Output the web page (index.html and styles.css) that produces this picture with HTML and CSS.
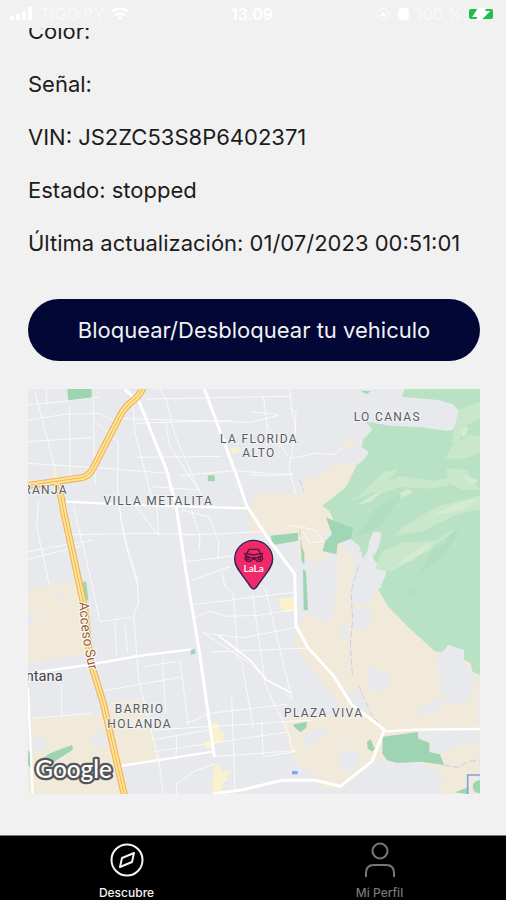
FILE: index.html
```html
<!DOCTYPE html>
<html lang="es">
<head>
<meta charset="utf-8">
<meta name="viewport" content="width=device-width, initial-scale=1">
<title>Tu vehiculo</title>
<link rel="stylesheet" href="styles.css">
</head>
<body>
<header class="status">
  <div class="status-side">
    <svg class="signal" viewBox="0 0 24 14" aria-hidden="true"><rect x="0" y="9" width="4" height="4" rx="1"/><rect x="6" y="7" width="4" height="6" rx="1"/><rect x="12" y="4" width="4" height="9" rx="1"/><rect x="18" y="0" width="4" height="13" rx="1"/></svg>
    <span class="faint">TIGO PY</span>
    <svg class="wifi" viewBox="0 0 20 14" aria-hidden="true"><path d="M1.500 5Q10-2 18.500 5M5 8.500q5-4 10 0" fill="none" stroke="#fff" stroke-width="2.600"/><path d="M7 10.500q3-2 6 0l-3 3z"/></svg>
  </div>
  <time class="clock">13.09</time>
  <div class="status-side status-end">
    <svg class="glyph" viewBox="0 0 14 14" aria-hidden="true"><circle cx="7" cy="7" r="5.500" fill="none" stroke="#fff"/><path d="M7 3.500 10 9H4z"/></svg>
    <svg class="glyph" viewBox="0 0 14 14" aria-hidden="true"><rect x="2" y="1" width="11" height="12" rx="4"/></svg>
    <span class="faint">100 %</span>
    <svg class="battery" viewBox="0 0 25 12" aria-hidden="true"><rect x="0" y="1" width="24" height="10" rx="2" fill="#20bd4b"/><path d="M10 0h6l-1 4h4l-8 8H8l2-4H5z" fill="#fff" stroke="#fff" stroke-width="2"/></svg>
  </div>
</header>

<main class="content">
  <ul class="details">
    <li>Color:</li>
    <li>Señal:</li>
    <li>VIN: JS2ZC53S8P6402371</li>
    <li>Estado: stopped</li>
    <li>Última actualización: 01/07/2023 00:51:01</li>
  </ul>
  <button class="lock" type="button">Bloquear/Desbloquear tu vehiculo</button>

  <svg class="map" viewBox="84 27 1356 1215" role="img" aria-label="Mapa">
    <rect x="84" y="27" width="1356" height="1215" fill="#e7e9ec"/>
    <!-- built-up and open land -->
    <g fill="#f1eadb">
      <path d="M84 629l157-30 20 90 12 130-189 34zM96 1017l212-16 60 164 20 77H84zM325 970l95-15 30 70 23 118-113 15z"/>
      <path d="M748 384l22-44h80l50 10 15-55 45-3 10-20 25-5 5-30 35 28 53-20-13 57-20 75-40 55-47 40 25 45-20 27-33 2-45-18-2-53-80-15-62-2z"/>
      <path d="M1033 176l65 27 16 42-55 45-50-60z"/>
      <path d="M1012 483l56 53-15 77-5 80 12 80-25-20-40-52 17-80z"/>
      <path d="M915 692l55 35 25-10 30-90 30-20 83 25 70 90 80 78 147 45v397h-120l15-45-65-48-115-8-60 10-76 80-55-12-15-41-50-20-25-55-20-60 12-28 120-10 45-20-145-193z"/>
    </g>
    <!-- grey settlements inside the open land -->
    <g fill="#e7e9ec">
      <path d="M1110 857l20 5 10 12 28 7-6 40-20 16-35-12-4-46zM1060 688l50-7 5 40-15 30-43-3zM1030 725l15 5v52l-20-5-8-22z"/>
      <path d="M1255 1055l165-5 20 20v15l-75 14-30 22-45-5v-30l-34-3zM1075 1190l60-35 95-8 92 25-10 70h-270zM1252 990l60-37 20 15-12 18-63 24zM916 1065l55-28 14 25-40 14-15 28-20-15zM1025 1110l50 5 3 25-20 37-43-17zM172 637h12l3 22-12 8-8-15zM84 700l20 10-2 18-18 5zM280 1057l28-3 16 43-38 5-12-25zM98 1070l45 5-2 20-20 22-23-7z"/>
      <path d="M1032 940l50-5 20 60-30-5zM1372 965l28-25 16 3-7 18z"/>
    </g>
    <!-- hills and parks -->
    <path d="M1215 27h225v858l-22-10-7-26-19-10v-29l-48-16-16 26-25-8-78-70-62-65-28-48 20-38 5-20-32-25-10-13 10-30-25 8-14 26-12-14 4-22-72-60-20-47-22-17 25-19 46-37 35-71 17-72 29-30-21-21-64-30v-65l25-9 80-50z" fill="#b9e2c4"/>
    <path d="M1020 27h195l-10 23 110 10 42 12 18 18v22l-16 37-18 3-80-10-90-5-70-12-40-12-41-1zM1030 203l55-3 22 17-18 25-25 17-48-14-15-25z" fill="#e7e9ec"/>
    <g fill="#c9e8cb">
      <path d="M1376 90l64-25v50l-48 24-16 45-20 10 8-55zM1355 200l50-35 35 4v50l-60 20-45-5zM1078 345l75-70 43-7-39 45-50 30-72 25zM1110 330l90-42 95 14 60-9-14 24-60 9-80-5-70 24zM1210 440l100-60 130-33v41l-75 18-95 47-85 13zM1145 515l66-28 95-4 55-36-33 50-63 25-90 52-50-4zM1340 265l60 5 40 60h-50l-45-20z"/>
    </g>
    <g fill="#d5ebcf">
      <path d="M1330 390l70-30 40-5-50 36-100 17zM1070 375l55-33 20-5-35 29zM1190 555l75-58 35-5-60 48zM1200 340l25-13 12 10-33 18zM1385 285l50 15-20 15zM1380 160l15-22 12 6-15 28z"/>
    </g>
    <g fill="#abdab9">
      <path d="M1300 495l80-50-45 80-80 60 35-65zM1228 635l20-18-8 22-12 13zM1125 385l80-40-65 95-85 35 45-45z" opacity=".5"/>
      <path d="M978 412l28 12 52 20-5 32-40 15-4 32-41-10 8-30 20-20z" fill="#9fd6b3"/>
    </g>
    <path d="M1120 455l23 2-2 30-15 35-23-10 5-30zM1085 553l22 7 10-12 10 17 25 15-8 42-20 10-10 35-52 8-12-40 18-70zM1068 520l18-6 3 35-15 8-9-20zM1312 828l34-30 46 38 5 25 25 20-5 48-33 35-25 12-20-6-23-70z" fill="#e7e9ec"/>
    <g fill="#9ed4b1">
      <path d="M202 27h73v28l-70 8zM624 286h20v18h-21zM812 467l82-9v24l-76 14zM902 490l11 30v35l-8-13zM909 567l9 8 6 116h-13zM249 604l10 2 6 56-12-4zM571 810l14-3 2 13-14 4zM880 1033l41-7-2 17-18 14-20-18zM1101 1085l11-7 12 28-7 9-14-9zM1148 1070l105-14 2 20 33 12v28l32 7 12 32-70-10-70 4-30-8-15-20zM84 1110l10 12v45l-10-12zM150 1120l65-25q12 12-12 24l-48 31-42-5zM1440 1200v40q-22-3-22-20t22-20M1365 1237l36-14v19zM1082 32l30 2-12 8z"/>
    </g>
    <g fill="#fbf1cd"><path d="M834 656l48-4 4 35-23 12-16-8zM636 1030l18-4 3 28 15 5-2 25-25 7-8 15-23-2v-20l23-6zM641 1160l14-5 13 20 25-5 2 12-20 6 10 12-18 7 2 15-12 18-20-5zM690 205l26-4 3 15-23 6z"/></g>

    <!-- minor streets -->
    <g fill="none" stroke="#fff" stroke-opacity=".75" stroke-width="3" stroke-linejoin="round">
      <path d="M84 75l116-12 98-12M105 35l58 225M137 27l5 45M281 55v110l5 150M84 120l110-17 105-3 60 32M84 185l190-12M84 250l95 6 125 8 190 15M208 75l3 230M285 125l35 30 35 32-3 130 10 95 23 110 25 85"/>
      <path d="M440 57l430-8M480 27l20 35 25 105 80 180M350 115l400 12 85-21M410 130l90-3 200-5M400 80l5 80 33 125 20 80M498 130l10 65 100 155M410 232l255-3M540 287l160-15 175 13M460 320l130 10M870 27l5 60 12 60-20 115 20 80M790 50l15 120M750 95l80 8M750 284l70 3 60-7"/>
      <path d="M115 365l-5 75 38 175M220 380l35 140 45 205 95-13M84 515l195-35M84 538l160-40M190 465l210-5 180 3M355 365l18 110 38 120 5 75-15 35 15 195 60 240 14 102M400 370l75 95M470 365l5 100"/>
      <path d="M575 390l25 80-3 40M545 390l80 20 32 75-3 50M555 465l245-10M560 545l140-18M575 600l115-40M570 675l310-38M585 712l45-18 50 15 95-3 110-18M665 570l10 50 25 20 15 200M758 645l38 270 70 145 5 30M795 620l52 220 30 120-20-20"/>
      <path d="M610 760l50 5 70 8 155-30M635 816l290-12M605 755l145 95 50 50 75 40M310 932l230-40M345 725l5 100M375 735l8 85M430 860l100-15M487 840l10 160M540 840l25 195M185 915v90M96 1015l180-15M455 1080l170-30M460 1050l480-30M560 1030l70-30 230-27M640 1130l245-18M460 1115l410-60M695 950l10 280M725 845l35 200M785 1025l5 100M530 1242v-30l55-40 60-20M530 1065l-2 75M870 1090l15 25-90 15"/>
      <path d="M870 235l80-15 55 3 25-22M865 437l45 5 38 10 22 32-42 5-20-35M870 85l18 10-2 60M800 130l65 100"/>
    </g>
    <path d="M655 766l95 74 50 60 75 40" fill="none" stroke="#fff" stroke-width="5"/>
    <!-- creek -->
    <g fill="none" stroke="#c8d0e5" stroke-width="3" stroke-dasharray="20 8"><path d="M1075 560l-22 75 5 80-7 80 6 90M1075 915l35 80 40 55M1330 1155l45 7 30-18 35-3M900 300l12 35M898 450l8 60"/></g>
    <!-- main avenues -->
    <g fill="none" stroke="#fff" stroke-linejoin="round">
      <path d="M373 27l45 40 80 198 30 110 30 200 40 240 45 315" stroke-width="9"/>
      <path d="M613 27l95 255 32 95 65 100 79 105 4 155 35 65 75 82 57 90 98 75-37 95-95 75-75-18h-98l-120 28-90 13" stroke-width="9"/>
      <path d="M198 365l180 9 362 11M1153 1054l90-5 197-2M84 880l180-25 150-27 160-20M84 925l14 317M360 1158l280-43" stroke-width="7"/>
      <path d="M165 260l4 50" stroke="#fbf1cd" stroke-width="8"/>
    </g>
    <!-- motorway -->
    <g fill="none" stroke-linejoin="round">
      <path d="M430 22q-12 25-28 38-27 18-43 50l-80 155q-12 24-34 28L80 317M172 310q12 35 18 80l65 300 15 150 40 130 24 105 40 174" stroke="#efb45c" stroke-width="21"/>
      <path d="M430 22q-12 25-28 38-27 18-43 50l-80 155q-12 24-34 28L80 317M172 310q12 35 18 80l65 300 15 150 40 130 24 105 40 174" stroke="#fee493" stroke-width="14"/>
      <path d="M430 22q-12 25-28 38-27 18-43 50l-80 155q-12 24-34 28L80 317M172 310q12 35 18 80l65 300 15 150 40 130 24 105 40 174" stroke="#efb45c" stroke-width="3"/>
    </g>
    <path d="M876 1173h17v10h-17z" fill="#7da4f5"/>
    <path d="M1403 1242v-57h37" fill="none" stroke="#7f9fe8" stroke-width="5"/>

    <!-- place names -->
    <g class="place">
      <text x="1162" y="124">LO CANAS</text>
      <text x="777" y="189">LA FLORIDA</text>
      <text x="777" y="232">ALTO</text>
      <text x="475" y="376">VILLA METALITA</text>
      <text x="204" y="343" class="end">GRANJA</text>
      <text x="419" y="999">BARRIO</text>
      <text x="419" y="1043">HOLANDA</text>
      <text x="971" y="1012">PLAZA VIVA</text>
    </g>
    <text class="town" x="188" y="902">Santana</text>
    <path id="road-name" d="M238 666q2 80 28 200" fill="none"/>
    <text class="road"><textPath href="#road-name">Acceso Sur</textPath></text>
    <text class="brand" x="106" y="1194">Google</text>

    <!-- vehicle pin -->
    <path d="M761 627c-7 0-11-9-18-19-17-25-39-46-39-70a57 57 0 0 1 114 0c0 24-22 45-39 70-7 10-11 19-18 19z" fill="#ef2a68" stroke="#24245b" stroke-width="4"/>
    <g fill="none" stroke="#55133f" stroke-width="4" stroke-linejoin="round">
      <path d="M738 524l9-16h28l9 16M731 521h8l22 4 22-4h7M737 526l-2 11 6 7h10l7-7h7l7 7h10l6-7-2-11-12 7h-24z"/>
      <circle cx="744" cy="535" r="4"/><circle cx="778" cy="535" r="4"/>
    </g>
    <text class="pin-name" x="761" y="577">LaLa</text>
  </svg>
</main>

<nav class="tabs">
  <a class="tab active" href="#descubre">
    <svg viewBox="0 0 36 36" aria-hidden="true"><circle cx="18" cy="18" r="15.500"/><path d="M25 11l-2 9-12 5 2-9z"/></svg>
    <span>Descubre</span>
  </a>
  <a class="tab" href="#perfil">
    <svg viewBox="0 0 36 36" aria-hidden="true"><circle cx="18" cy="9" r="7.500"/><path d="M4 35v-4q0-8 8-8h12q8 0 8 8v4"/></svg>
    <span>Mi Perfil</span>
  </a>
</nav>
</body>
</html>
```

FILE: styles.css
```css
* {
  box-sizing: border-box;
}

body {
  margin: 0;
  min-height: 100vh;
  display: flex;
  flex-direction: column;
  background: #f1f1f1;
  color: #1c1c1c;
  font-family: Inter, "Liberation Sans", sans-serif;
}

.status {
  display: grid;
  grid-template-columns: 1fr auto 1fr;
  align-items: center;
  height: 28px;
  padding: 0 12px 0 10px;
  color: #fff;
  font-size: 16px;
  line-height: 20px;
}

.status svg {
  fill: #fff;
}

.status-side {
  display: flex;
  align-items: center;
  gap: 6px;
}

.status-end {
  justify-content: flex-end;
}

.faint {
  color: #f9f9f9;
}

.clock {
  font-weight: 600;
}

.signal {
  width: 24px;
  height: 14px;
}

.wifi {
  width: 20px;
  height: 14px;
}

.glyph {
  width: 14px;
  height: 14px;
}

.battery {
  width: 25px;
  height: 12px;
}

.content {
  flex: 1;
  display: flex;
  flex-direction: column;
  overflow: hidden;
  padding: 0 26px 41px 28px;
}

.details {
  display: flex;
  flex-direction: column;
  gap: 25px;
  margin: -11px 0 42px;
  padding: 0;
  list-style: none;
  font-size: 22px;
  line-height: 28px;
}

.lock {
  height: 62px;
  border: 0;
  border-radius: 31px;
  background: #020735;
  color: #f1f1f4;
  font: 400 22px/28px Inter, "Liberation Sans", sans-serif;
}

.map {
  display: block;
  width: 100%;
  height: auto;
  margin-top: 28px;
}

.map text {
  paint-order: stroke;
  stroke-linejoin: round;
}

.place {
  fill: #565b62;
  stroke: #f2f3f5;
  stroke-width: 6px;
  font: 400 36px Roboto, sans-serif;
  letter-spacing: 4px;
  text-anchor: middle;
}

.end {
  text-anchor: end;
}

.town {
  fill: #3f4247;
  stroke: #f2f3f5;
  stroke-width: 6px;
  font: 400 44px Roboto, sans-serif;
  text-anchor: end;
}

.road {
  fill: #8f5b3c;
  stroke: #fff;
  stroke-width: 6px;
  font: 400 41px Roboto, sans-serif;
}

.brand {
  fill: #fff;
  stroke: #55565a;
  stroke-width: 14px;
  font: 500 73px Lato, sans-serif;
}

.pin-name {
  fill: #fff;
  font: 600 30px Lato, sans-serif;
  text-anchor: middle;
}

.tabs {
  display: grid;
  grid-template-columns: 1fr 1fr;
  height: 65px;
  border-top: 1px solid #777;
  background: #000;
}

.tab {
  display: flex;
  flex-direction: column;
  align-items: center;
  gap: 7px;
  padding-top: 6px;
  color: #777;
  font-size: 12px;
  font-weight: 500;
  line-height: 16px;
  text-decoration: none;
}

.tab svg {
  width: 36px;
  height: 36px;
  fill: none;
  stroke: currentColor;
  stroke-width: 2px;
  stroke-linejoin: round;
}

.active {
  color: #f4f4f4;
}
```
